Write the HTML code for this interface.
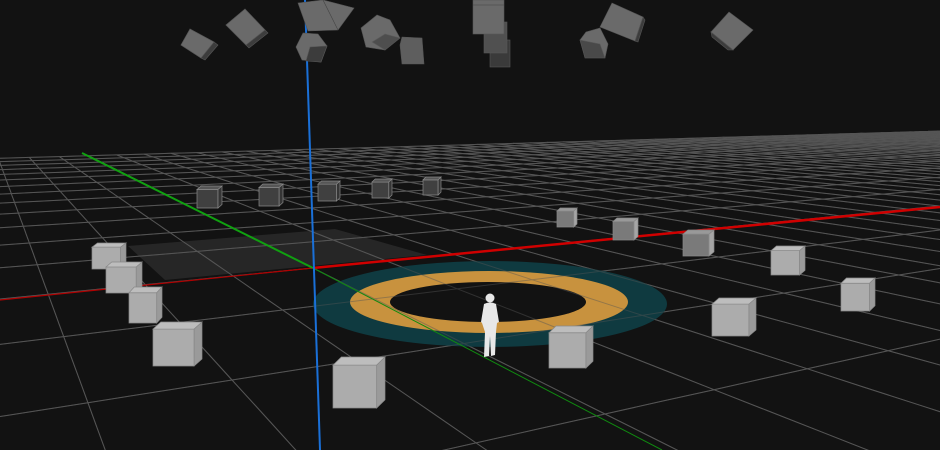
<!DOCTYPE html>
<html><head><meta charset="utf-8"><style>
html,body{margin:0;padding:0;background:#121212;overflow:hidden;width:940px;height:450px}
svg{display:block;position:absolute;left:0;top:0}
</style></head><body>
<svg id="s" width="940" height="450" viewBox="0 0 940 450" xmlns="http://www.w3.org/2000/svg">
<rect width="940" height="450" fill="#121212"/>
<polygon points="128,246 335,229 427,255 165,280" fill="#262626"/>
<g id="grid" stroke="#555" stroke-width="1" fill="none"></g>
<ellipse cx="490" cy="304" rx="177" ry="43" fill="#0f3a40"/>
<ellipse cx="489" cy="302" rx="139" ry="31" fill="#c8923e"/>
<ellipse cx="488" cy="302" rx="98" ry="20" fill="#121212"/>
<g id="grid2" stroke="#555" stroke-width="1" fill="none" opacity="0.45"></g>
<line x1="0" y1="300" x2="313" y2="268" stroke="#b00000" stroke-width="1.2"/>
<line x1="313" y1="268" x2="940" y2="207" stroke="#d00000" stroke-width="2.5"/>
<line x1="82" y1="153" x2="313" y2="268" stroke="#10a010" stroke-width="2"/>
<line x1="313" y1="268" x2="662" y2="450" stroke="#108a10" stroke-width="1"/>
<line x1="305" y1="0" x2="320" y2="450" stroke="#1a70d8" stroke-width="2"/>
<g id="cubes"></g>
<g stroke="#555" stroke-width="0.6">
<polygon points="181,45 190,29 214,42 218,45 205,60 201,58" fill="#3c3c3c"/>
<polygon points="181,45 190,29 214,42 201,58" fill="#6a6a6a"/>
<polygon points="226,25 245,9 265,30 268,33 249,48 246,45" fill="#3c3c3c"/>
<polygon points="226,25 245,9 265,30 246,45" fill="#6a6a6a"/>
<polygon points="298,3 323,0 354,8 338,30 308,31" fill="#6a6a6a"/>
<line x1="323" y1="0" x2="338" y2="30" stroke="#444"/>
<polygon points="296,47 303,33 318,34 327,46 321,62 302,60" fill="#6a6a6a"/>
<polygon points="310,47 327,46 321,62 306,61" fill="#3c3c3c"/>
<polygon points="361,28 377,15 390,20 400,38 385,50 366,47" fill="#6a6a6a"/>
<polygon points="385,50 400,38 385,34 372,42" fill="#3c3c3c" opacity="0.6"/>
<polygon points="400,45 402,37 422,38 424,64 402,64" fill="#5e5e5e"/>
<rect x="490" y="40" width="20" height="27" fill="#3a3a3a"/>
<rect x="484" y="22" width="23" height="31" fill="#505050"/>
<rect x="473" y="0" width="31" height="34" fill="#6a6a6a"/>
<line x1="473" y1="5" x2="504" y2="5" stroke="#444"/>
<polygon points="580,40 586,32 600,28 608,44 605,58 585,58" fill="#6a6a6a"/>
<polygon points="580,40 585,58 605,58 600,44" fill="#3c3c3c" opacity="0.7"/>
<polygon points="600,27 612,3 643,17 635,41" fill="#6a6a6a"/>
<polygon points="635,41 643,17 645,20 638,42" fill="#3c3c3c"/>
<polygon points="711,32 729,12 753,30 733,50" fill="#6a6a6a"/>
<polygon points="711,32 733,50 728,50 712,37" fill="#3c3c3c"/>
</g>
<g fill="#e8e8e8">
<circle cx="490" cy="298" r="4.5"/>
<path d="M484,304 Q490,301 496,304 L499,322 L497,323 L496,332 L495,355 L491,356 L490,336 L489,356 L484,357 L485,332 L482,323 L481,322 Z"/>
</g>
</svg>
<script>
(function(){
var VX=[2010,100],VZ=[-23,100],O=[313,268],a=0.045,b=0.155;
function P(u,v){var w=a*u+b*v+1;if(w<0.04)return null;
return [(a*u*VX[0]+b*v*VZ[0]+O[0])/w,(a*u*VX[1]+b*v*VZ[1]+O[1])/w];}
var g=document.getElementById('grid'),g2=document.getElementById('grid2'),NS='http://www.w3.org/2000/svg';
function poly(pts,par){var d='',on=false;pts.forEach(function(p){if(!p){on=false;return;}d+=(on?'L':'M')+p[0].toFixed(1)+','+p[1].toFixed(1);on=true;});
if(!d)return;var e=document.createElementNS(NS,'path');e.setAttribute('d',d);par.appendChild(e);}
var U0=-30,U1=60,V0=-12,V1=13;
for(var par of [g,g2]){
for(var v=V0;v<=V1;v++){var pts=[];for(var u=U0;u<=U1;u+=0.5)pts.push(P(u,v));poly(pts,par);}
for(var u=U0;u<=U1;u++){var pts=[];for(var v=V0;v<=V1;v+=0.25)pts.push(P(u,v));poly(pts,par);}
}
var C=document.getElementById('cubes');
function cube(x,y,w,h,f,t,s){var k=0.16*h,r=0.84*w;
C.insertAdjacentHTML('beforeend','<g stroke="#888" stroke-width="0.7">'+
'<polygon points="'+x+','+(y+k)+' '+(x+r)+','+(y+k)+' '+(x+r)+','+(y+h)+' '+x+','+(y+h)+'" fill="'+f+'"/>'+
'<polygon points="'+x+','+(y+k)+' '+(x+w-r)+','+y+' '+(x+w)+','+y+' '+(x+r)+','+(y+k)+'" fill="'+t+'"/>'+
'<polygon points="'+(x+r)+','+(y+k)+' '+(x+w)+','+y+' '+(x+w)+','+(y+h-k)+' '+(x+r)+','+(y+h)+'" fill="'+s+'"/></g>');}
var D=['#404040','#565656','#353535'],L=['#acacac','#bdbdbd','#9a9a9a'],M=['#7a7a7a','#999','#a5a5a5'];
[[197,186,25,22],[259,184,24,22],[318,181,22,20],[372,179,20,19],[423,177,18,18]].forEach(function(c){cube(c[0],c[1],c[2],c[3],D[0],D[1],D[2]);});
[[557,208,20,19],[613,218,25,22],[683,230,31,26]].forEach(function(c){cube(c[0],c[1],c[2],c[3],M[0],M[1],M[2]);});
[[771,246,34,29],[841,278,34,33],[712,298,44,38],[92,243,34,26],[106,262,36,31],[129,287,33,36],[153,322,49,44],[549,326,44,42],[333,357,52,51]].forEach(function(c){cube(c[0],c[1],c[2],c[3],L[0],L[1],L[2]);});
})();
</script>
</body></html>
